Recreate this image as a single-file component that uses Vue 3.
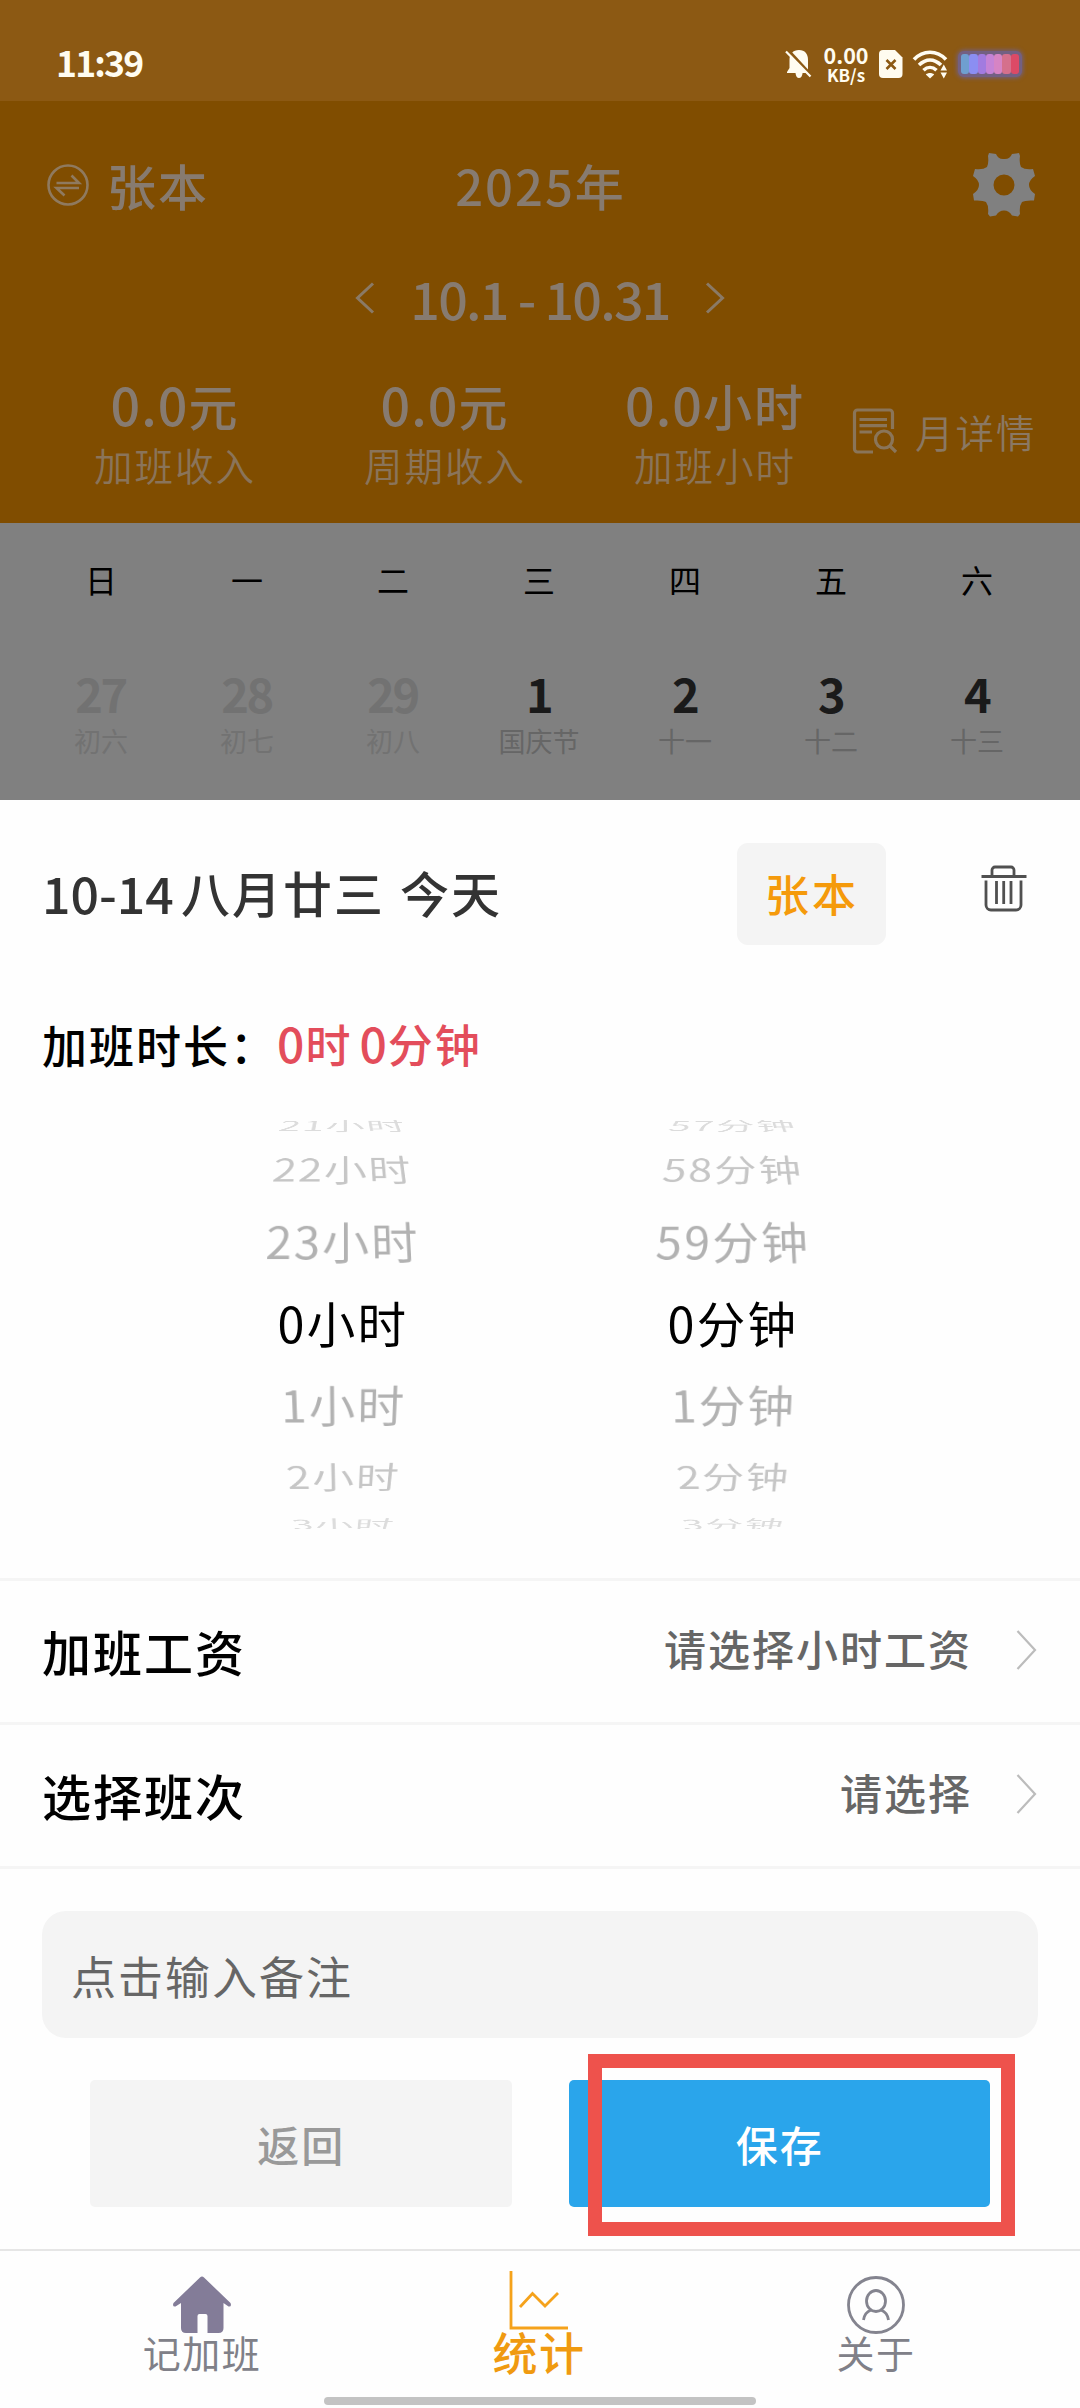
<script setup>
const stats = [
  { value: '0.0', unit: '元', label: '加班收入' },
  { value: '0.0', unit: '元', label: '周期收入' },
  { value: '0.0', unit: '小时', label: '加班小时' }
]
const week = ['日', '一', '二', '三', '四', '五', '六']
const days = [
  { n: '27', lunar: '初六', out: true },
  { n: '28', lunar: '初七', out: true },
  { n: '29', lunar: '初八', out: true },
  { n: '1', lunar: '国庆节' },
  { n: '2', lunar: '十一' },
  { n: '3', lunar: '十二' },
  { n: '4', lunar: '十三' }
]
const wheels = [
  ['21', '22', '23', '0', '1', '2', '3'].map(n => ({ n, unit: '小时' })),
  ['57', '58', '59', '0', '1', '2', '3'].map(n => ({ n, unit: '分钟' }))
]
const rows = [
  { label: '加班工资', hint: '请选择小时工资' },
  { label: '选择班次', hint: '请选择' }
]
const bars = ['#6f9fd0', '#8b8ef2', '#a27be0', '#c583d6', '#d684c4', '#d5708c', '#dc4a66']
</script>

<template>
  <div class="app">
    <div class="status">
      <span class="clock">11:39</span>
      <div class="sys">
        <svg class="bell" width="26" height="30" viewBox="0 0 26 30">
          <path d="M13 1C7 1 3.500 5 3.500 11v8L1 23v1h8.500c.3 3 1.500 5 3.500 5s3.300-2 3.600-5H22v-5.500V11C22 5 19 1 13 1z" fill="#fffcf0" />
          <path d="M2 1L26 27" stroke="#8c5913" stroke-width="3" />
          <path d="M0 2.500L24.500 27.500" stroke="#fffcf0" stroke-width="2.200" />
        </svg>
        <div class="net"><b class="rate">0.00</b><b class="kb">KB/s</b></div>
        <svg class="sim" width="24" height="28" viewBox="0 0 24 28">
          <path d="M4 0h12l7.500 7.500V24a4 4 0 0 1-4 4H4a4 4 0 0 1-4-4V4a4 4 0 0 1 4-4z" fill="#fffcf0" />
          <path d="M7.500 10l9 9M16.500 10l-9 9" stroke="#8c5913" stroke-width="2.600" />
        </svg>
        <svg class="wifi" width="35" height="28" viewBox="0 0 35 28">
          <g fill="none" stroke="#fffcf0" stroke-width="3.600">
            <path d="M1 9.500C10-.2 24-.2 33 9.500" />
            <path d="M6 15C13 8.300 21 8.300 28 15" />
            <path d="M10.500 20.300C14.500 16.500 19.500 16.500 23.500 20.300" />
          </g>
          <path d="M12.800 24.500C15 22.500 19 22.500 21.200 24.500L17 28.500z" fill="#fffcf0" />
          <path d="M27.500 20.500L30.800 14.500 34 20.500zM27.500 22.500L30.800 28.500 34 22.500z" fill="#fffcf0" />
        </svg>
        <div class="battery">
          <i v-for="c in bars" :key="c" :style="{ background: c }"></i>
        </div>
      </div>
    </div>

    <header class="head">
      <div class="bar">
        <div class="book">
          <svg width="42" height="42" viewBox="0 0 42 42" fill="none" stroke="#8f7a5f" stroke-width="2.600">
            <circle cx="21" cy="21" r="19.500" />
            <path d="M9.500 19H32L24.500 11.500M32 24H9.500L17.500 31.500" />
          </svg>
          <span class="big">张本</span>
        </div>
        <span class="big year">2025年</span>
        <div class="gear">
          <svg width="64" height="64" viewBox="-32 -32 64 64">
            <path fill="#808080" fill-rule="evenodd" d="M-15-32L-8-31Q-6-26-1-26H1Q6-26 8-31L15-32 16-29Q15-22 17-18 21-15 29-16L31-9Q25-5 25 0 25 5 31 9L30 15.500Q21 15 18 17 15 21 16 29L14 31.500 8 30.500Q5 25.500 0 25.500-5 25.500-8 30.500L-14 31.500-16 29Q-15 21-18 17-21 15-30 15.500L-31 9Q-25 5-25 0-25-5-31-9L-29-16Q-21-15-17-18-15-22-16-29zM0-10.500A10.500 10.500 0 1 0 0 10.500 10.500 10.500 0 1 0 0-10.500z" />
          </svg>
        </div>
      </div>
      <div class="range">
        <svg width="20" height="32" viewBox="0 0 20 32" fill="none" stroke="#8a7a66" stroke-width="3"><path d="M18 1.500L2.500 16 18 30.500" /></svg>
        <span class="big period">10.1 - 10.31</span>
        <svg width="20" height="32" viewBox="0 0 20 32" fill="none" stroke="#8a7a66" stroke-width="3"><path d="M2 1.500L17.500 16 2 30.500" /></svg>
      </div>
      <div class="stats">
        <div v-for="s in stats" :key="s.label" class="stat">
          <span class="big val"><span class="dig">{{ s.value }}</span>{{ s.unit }}</span>
          <span class="lab">{{ s.label }}</span>
        </div>
        <div class="detail">
          <svg width="46" height="46" viewBox="0 0 46 46" fill="none" stroke="#8a7559" stroke-width="3.200">
            <path d="M21 44H5.500a3 3 0 0 1-3-3V5a3 3 0 0 1 3-3h32a3 3 0 0 1 3 3V21" />
            <path d="M7.500 11.500H35M7.500 17.700H35M7.500 24H20" />
            <circle cx="32" cy="31.500" r="8.500" /><path d="M38 38L44 44" />
          </svg>
          <span class="lab">月详情</span>
        </div>
      </div>
    </header>

    <section class="cal">
      <div class="week"><span v-for="w in week" :key="w">{{ w }}</span></div>
      <div class="days">
        <div v-for="d in days" :key="d.n" class="day" :class="{ out: d.out }">
          <b>{{ d.n }}</b><span>{{ d.lunar }}</span>
        </div>
      </div>
    </section>

    <section class="sheet">
      <div class="title">
        <div class="date"><span class="md">10-14</span><span class="lun">八月廿三</span><span class="today">今天</span></div>
        <div class="tag">张本</div>
        <svg class="trash" width="48" height="48" viewBox="0 0 48 48" fill="none" stroke="#505050" stroke-width="2.800">
          <path d="M1.500 11.500H46.500M12 11V5a3 3 0 0 1 3-3H31a3 3 0 0 1 3 3V11M6 15.500V40a5 5 0 0 0 5 5H36a5 5 0 0 0 5-5V15.500M16.500 16V39M23.700 16V39M31 16V39" />
        </svg>
      </div>
      <div class="dur"><span class="cap">加班时长：</span><span class="red"><i>0</i>时<i class="gap">0</i>分钟</span></div>
      <div class="picker">
        <div v-for="(w, k) in wheels" :key="k" class="wheel">
          <div v-for="(it, i) in w" :key="it.n" class="item" :class="'p' + i">{{ it.n }}{{ it.unit }}</div>
        </div>
      </div>
      <div v-for="r in rows" :key="r.label" class="row">
        <span class="name">{{ r.label }}</span>
        <span class="hint">{{ r.hint }}</span>
        <svg width="21" height="40" viewBox="0 0 21 40" fill="none" stroke="#bcbcbc" stroke-width="2.200"><path d="M1.500 1L19 20 1.500 39" /></svg>
      </div>
      <div class="foot">
        <div class="note">点击输入备注</div>
        <div class="btns">
          <div class="btn back">返回</div>
          <div class="btn save">保存<div class="mark"></div></div>
        </div>
      </div>
    </section>

    <nav class="tabs">
      <div class="tab">
        <svg width="60" height="58" viewBox="0 0 60 58">
          <path d="M28 1.500Q30-.5 32 1.500L58.500 27Q60 31 56.500 30.500L51.500 27V52Q51.500 57 46.500 57H35.500V40Q35.500 38 33.500 38H27.500Q25.500 38 25.500 40V57H14Q9 57 9 52V27L3.500 30.500Q0 31 1.500 27z" fill="#837c98" />
        </svg>
        <span>记加班</span>
      </div>
      <div class="tab on">
        <svg width="60" height="58" viewBox="0 0 60 58" fill="none" stroke="#f5a21b" stroke-width="2.800">
          <path d="M2-5V52H59M11 31L23.500 17.500 36 30 49 17" />
        </svg>
        <span>统计</span>
      </div>
      <div class="tab">
        <svg width="60" height="58" viewBox="0 0 60 58" fill="none" stroke="#84848f" stroke-width="2.800">
          <circle cx="30" cy="29" r="27.500" />
          <ellipse cx="30" cy="25" rx="9.500" ry="10.500" />
          <path d="M17.500 44Q18.500 36.500 25 34M42.500 44Q41.500 36.500 35 34" />
        </svg>
        <span>关于</span>
      </div>
      <div class="pill"></div>
    </nav>
  </div>
</template>

<style>
body { margin: 0; background: #fefefe; }
</style>

<style scoped>
.app { width: 1080px; height: 2408px; overflow: hidden; display: flex; flex-direction: column; background: #fefefe; font-family: "Noto Sans CJK SC", sans-serif; color: #000; white-space: nowrap; line-height: 1; }
svg { display: block; flex: none; overflow: visible; }
i { font-style: normal; }
.status { height: 101px; flex: none; box-sizing: border-box; background: #8c5913; display: flex; justify-content: space-between; padding: 0 58px 0 56px; color: #fffcf0; }
.clock { font-size: 35.500px; font-weight: 700; line-height: 123px; letter-spacing: -1.800px; }
.sys { display: flex; align-items: center; height: 128px; }
.net { display: flex; flex-direction: column; align-items: center; width: 50px; margin: 0 8px 0 9px; }
.rate { font-size: 21.500px; line-height: 21px; }
.kb { font-size: 17px; line-height: 20px; }
.sim { margin-right: 10px; }
.wifi { margin-right: 10px; }
.battery { display: flex; width: 58px; height: 20px; padding: 3px; border-radius: 6px; background: #736083; box-shadow: 0 0 4px 1px #736083; }
.battery i { width: 8.300px; border-radius: 3px; }

.head { height: 422px; flex: none; background: #804d00; color: #877b70; }
.bar { height: 168px; display: flex; align-items: center; padding: 0 44px 0 47px; }
.big { font-size: 49px; font-weight: 500; letter-spacing: 2px; }
.bar .big { position: relative; top: -1px; }
.year { left: -1px; }
.book { flex: 1; display: flex; align-items: center; gap: 18px; }
.gear { flex: 1; display: flex; justify-content: flex-end; }
.range { height: 58px; display: flex; justify-content: center; align-items: center; }
.period { font-size: 52px; width: 330px; text-align: center; letter-spacing: -1.750px; }
.stats { display: flex; padding: 52px 0 0 40px; }
.stat { width: 270px; display: flex; flex-direction: column; align-items: center; }
.val { line-height: 50px; margin-bottom: 4px; }
.dig { font-size: 52px; letter-spacing: 1px; }
.lab { font-size: 38.500px; line-height: 60px; letter-spacing: 2px; font-weight: 350; color: #8a745a; }
.detail { display: flex; align-items: center; height: 98px; gap: 17px; margin: 3px 0 0 2px; }
.detail .lab { color: #8a7863; }

.cal { height: 277px; flex: none; background: #808080; }
.week, .days { display: flex; padding: 0 28px; }
.week { height: 112px; line-height: 112px; font-size: 32px; }
.week span, .day { width: 146px; text-align: center; flex: none; }
.days { padding-top: 34px; }
.day { display: flex; flex-direction: column; font-size: 27px; color: #666; }
.day b { font-size: 47px; line-height: 48px; font-weight: 700; color: #1a1a1a; letter-spacing: -2.500px; text-indent: -1px; }
.day span { line-height: 48px; }
.day.out, .day.out b { color: #727272; }

.sheet { height: 1449px; flex: none; background: #fefefe; }
.title { height: 190px; display: flex; align-items: center; padding: 0 52px 0 42px; }
.date { flex: 1; display: flex; color: #333; font-size: 49px; font-weight: 500; letter-spacing: 2px; margin-top: -6px; }
.md { letter-spacing: 0; width: 139px; font-size: 50px; }
.lun { width: 219px; }
.tag { width: 149px; height: 102px; line-height: 101px; border-radius: 11px; background: #f4f4f4; color: #f59a0b; text-align: center; font-size: 44px; letter-spacing: 3px; text-indent: 1px; font-weight: 500; margin-right: 94px; margin-top: -3px; }
.trash { margin-top: -12px; }
.dur { height: 130px; line-height: 104px; padding-left: 42px; display: flex; font-size: 45px; letter-spacing: 2px; font-weight: 500; }
.cap { margin-top: 3px; }
.red { color: #e34d5b; }
.red i { font-size: 48px; letter-spacing: 1px; }
.red .gap { margin-left: 7px; }
.picker { height: 409px; overflow: hidden; display: flex; padding-left: 148px; margin-bottom: 49px; }
.wheel { width: 390px; height: 403px; display: flex; flex-direction: column; align-items: center; justify-content: center; }
.item { height: 82px; line-height: 82px; flex: none; font-size: 48.500px; letter-spacing: 2.300px; color: #b2b2b2; }
.p3 { color: #000; }
.p2 { transform: scale(.96) perspective(500px) rotateX(21deg); }
.p4 { transform: scale(.96) perspective(500px) rotateX(-21deg); }
.p1, .p5 { color: #c6c6c6; }
.p1 { transform: translateY(10px) scale(.87) perspective(500px) rotateX(44deg); }
.p5 { transform: translateY(-10px) scale(.87) perspective(500px) rotateX(-44deg); }
.p0, .p6 { color: #dcdcdc; }
.p0 { transform: translateY(49px) scale(.79) perspective(500px) rotateX(70deg); }
.p6 { transform: translateY(-44px) scale(.79) perspective(500px) rotateX(-70deg); }
.row { height: 141px; border-top: 3px solid #f5f5f5; display: flex; align-items: center; padding: 0 43px 0 42px; }
.name { flex: 1; font-size: 49px; font-weight: 500; letter-spacing: 2px; margin-top: -2px; }
.hint { font-size: 42px; font-weight: 500; letter-spacing: 2px; color: #666; margin: -8px 44px 0 0; }
.row svg { margin-top: -4px; }
.foot { border-top: 3px solid #f5f5f5; padding: 42px 42px 0; }
.note { height: 127px; line-height: 129px; border-radius: 24px; background: #f4f4f4; color: #666; font-size: 45px; letter-spacing: 2px; padding-left: 29px; }
.btns { display: flex; gap: 57px; padding: 42px 48px 0; }
.btn { flex: 1; height: 127px; line-height: 127px; border-radius: 5px; text-align: center; font-size: 42px; font-weight: 500; letter-spacing: 2px; text-indent: 1px; }
.back { background: #f4f4f4; color: #999; }
.save { position: relative; background: #2aa5eb; color: #fff; }
.mark { position: absolute; left: 19px; top: -26px; width: 399px; height: 154px; border: 14px solid #ee524c; }

.tabs { position: relative; height: 159px; flex: none; box-sizing: border-box; border-top: 2px solid #e6e6e6; background: #fefefe; display: flex; padding: 25px 96px 0 94px; justify-content: space-between; }
.tab { width: 216px; display: flex; flex-direction: column; align-items: center; font-size: 38px; letter-spacing: 1.500px; color: #808088; }
.tab span { line-height: 36px; }
.on { color: #f09a10; font-size: 45px; font-weight: 500; }
.pill { position: absolute; left: 324px; top: 146px; width: 432px; height: 8px; border-radius: 4px; background: #c3c3c3; }
</style>
